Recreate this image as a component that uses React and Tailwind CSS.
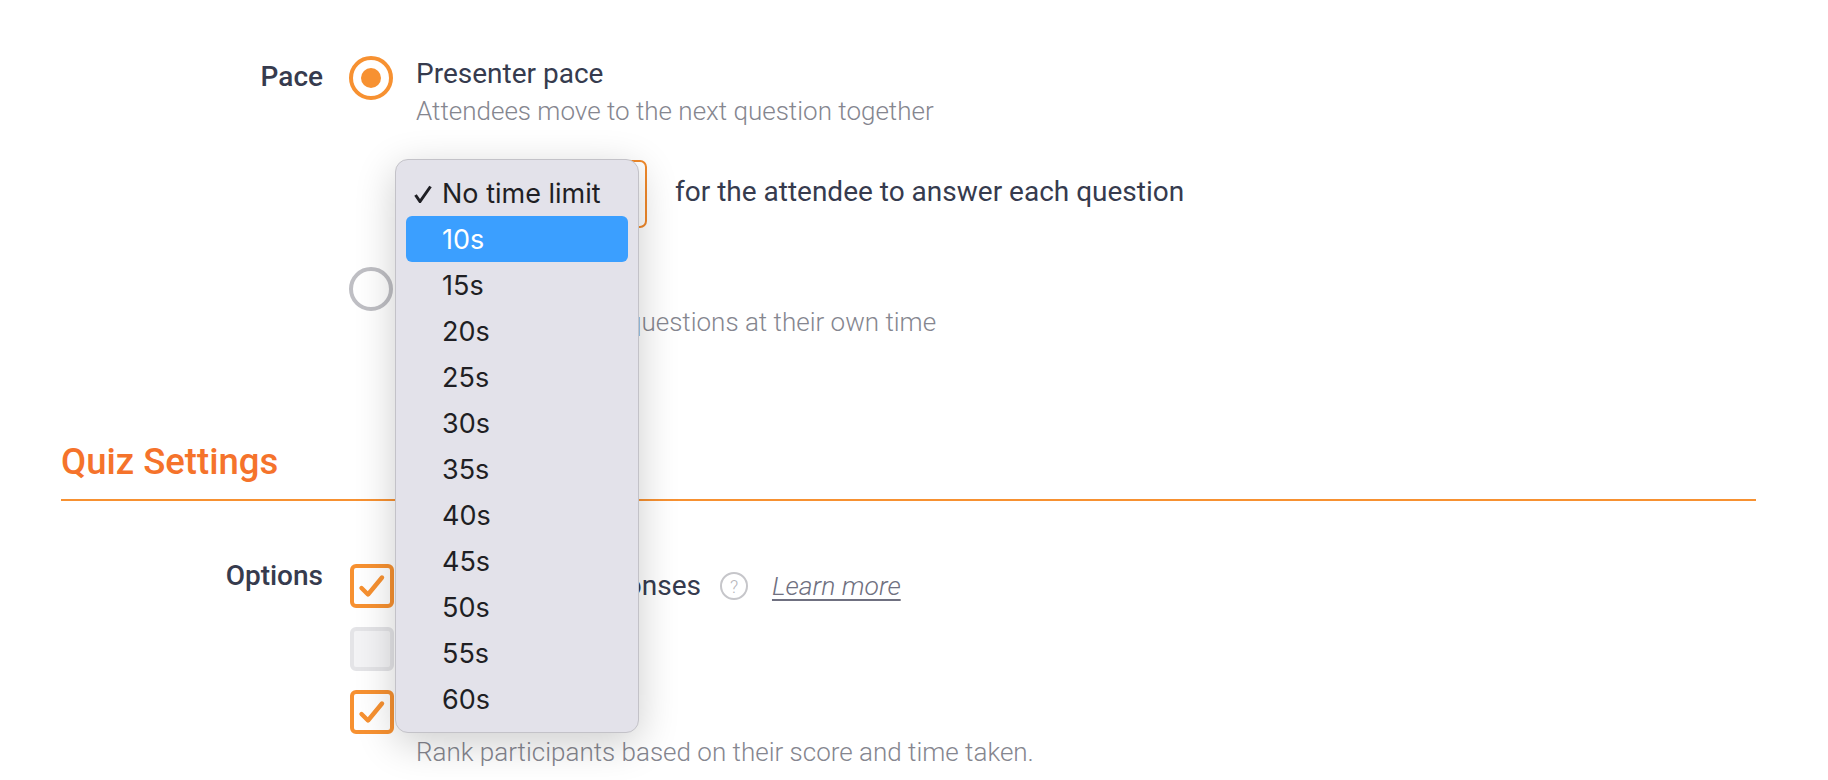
const items = ["No time limit","10s","15s","20s","25s","30s","35s","40s","45s","50s","55s","60s"];

function Check() {
  return (
    <svg viewBox="0 0 44 44" className="w-full h-full" fill="none">
      <path d="M11.5 24 L18 30.5 L32 13.5" stroke="#F79131" strokeWidth="4.4" strokeLinecap="round" strokeLinejoin="round" />
    </svg>
  );
}

function Box({ checked }) {
  return checked ? (
    <div className="w-[44px] h-[44px] shrink-0 rounded-[6px] border-[4px] border-[#F79131] bg-white">
      <div className="-m-[4px] w-[44px] h-[44px]"><Check /></div>
    </div>
  ) : (
    <div className="w-[44px] h-[44px] shrink-0 rounded-[6px] border-[4px] border-[#E4E4E7] bg-[#F3F3F5]" />
  );
}

function Menu() {
  return (
    <div className="absolute left-[-23px] top-[-3px] w-[244px] h-[574px] z-10 rounded-[13px] border border-[#C3C2C8] bg-[#E3E2EA] pt-[10px] px-[10px] shadow-[0_10px_40px_rgba(0,0,0,0.2)] font-['Inter',sans-serif] text-[27px] text-[#1F1F24]">
      {items.map((t, i) => (
        <div key={t} className={`relative h-[46px] flex items-center pl-[36px] pt-[3px] rounded-[6px] ${i === 1 ? "bg-[#3B9FFF] text-white" : ""}`}>
          {i === 0 && (
            <svg viewBox="0 0 18 18" className="absolute left-[8px] top-[15px] w-[18px] h-[18px]" fill="none">
              <path d="M1.5 10 L6 16.5 L16.5 1.5" stroke="#1F1F24" strokeWidth="3" />
            </svg>
          )}
          {t}
        </div>
      ))}
    </div>
  );
}

export default function App() {
  return (
    <div className="h-[780px] overflow-hidden bg-white pt-[56px] pl-[61px] pr-[66px] font-['Roboto',sans-serif] text-[#363B4E]">
      <div className="flex">
        <div className="w-[262px] shrink-0 text-right text-[28px] font-medium leading-[42px]">Pace</div>
        <div className="ml-[26px] flex flex-col">
          <div className="flex gap-[23px]">
            <div className="w-[44px] h-[44px] shrink-0 rounded-full border-[4px] border-[#F79131] flex items-center justify-center">
              <div className="w-[20px] h-[20px] rounded-full bg-[#F79131]" />
            </div>
            <div className="flex flex-col">
              <div className="text-[28px] leading-[36px]">Presenter pace</div>
              <div className="mt-[-1px] text-[26px] leading-[40px] font-light text-[#85868F]">Attendees move to the next question together</div>
            </div>
          </div>
          <div className="flex items-center ml-[67px] mt-[29px]">
            <div className="relative w-[231px] h-[68px] rounded-[7px] border-2 border-[#F0892B]">
              <Menu />
            </div>
            <div className="ml-[28px] mb-[5px] text-[28px] leading-[34px]">for the attendee to answer each question</div>
          </div>
          <div className="flex gap-[23px] mt-[39px]">
            <div className="w-[44px] h-[44px] shrink-0 rounded-full border-[4px] border-[#BFBFC4]" />
            <div className="flex flex-col">
              <div className="text-[28px] leading-[34px]">Self pace</div>
              <div className="mt-[1px] text-[26px] leading-[40px] font-light text-[#85868F]">Attendees answer questions at their own time</div>
            </div>
          </div>
        </div>
      </div>

      <div className="mt-[100px] mr-[6px] border-b-2 border-[#F79131] pb-[17px] text-[36.5px] leading-[40px] font-medium text-[#F5732B]">Quiz Settings</div>

      <div className="flex mt-[63px]">
        <div className="w-[262px] shrink-0 text-right text-[28px] font-medium leading-[24px]">Options</div>
        <div className="ml-[27px] flex flex-col gap-[19px]">
          <div className="flex items-center gap-[22px]">
            <Box checked />
            <div className="ml-[9px] text-[28px] leading-[34px]">Randomize responses</div>
            <div className="ml-[-3px] w-[28px] h-[28px] rounded-full border-2 border-[#C6C6CA] flex items-center justify-center text-[18px] font-light text-[#B5B5BA]">?</div>
            <div className="ml-[2px] text-[26.5px] leading-[32px] font-light italic underline underline-offset-[4px] text-[#6F7080]">Learn more</div>
          </div>
          <div className="flex items-center gap-[22px]">
            <Box />
            <div className="text-[28px] leading-[34px]">Show results</div>
          </div>
          <div className="flex gap-[22px]">
            <Box checked />
            <div className="flex flex-col">
              <div className="text-[28px] leading-[44px]">Leaderboard</div>
              <div className="mt-[-2px] text-[26px] leading-[40px] font-light text-[#85868F]">Rank participants based on their score and time taken.</div>
            </div>
          </div>
        </div>
      </div>
    </div>
  );
}
